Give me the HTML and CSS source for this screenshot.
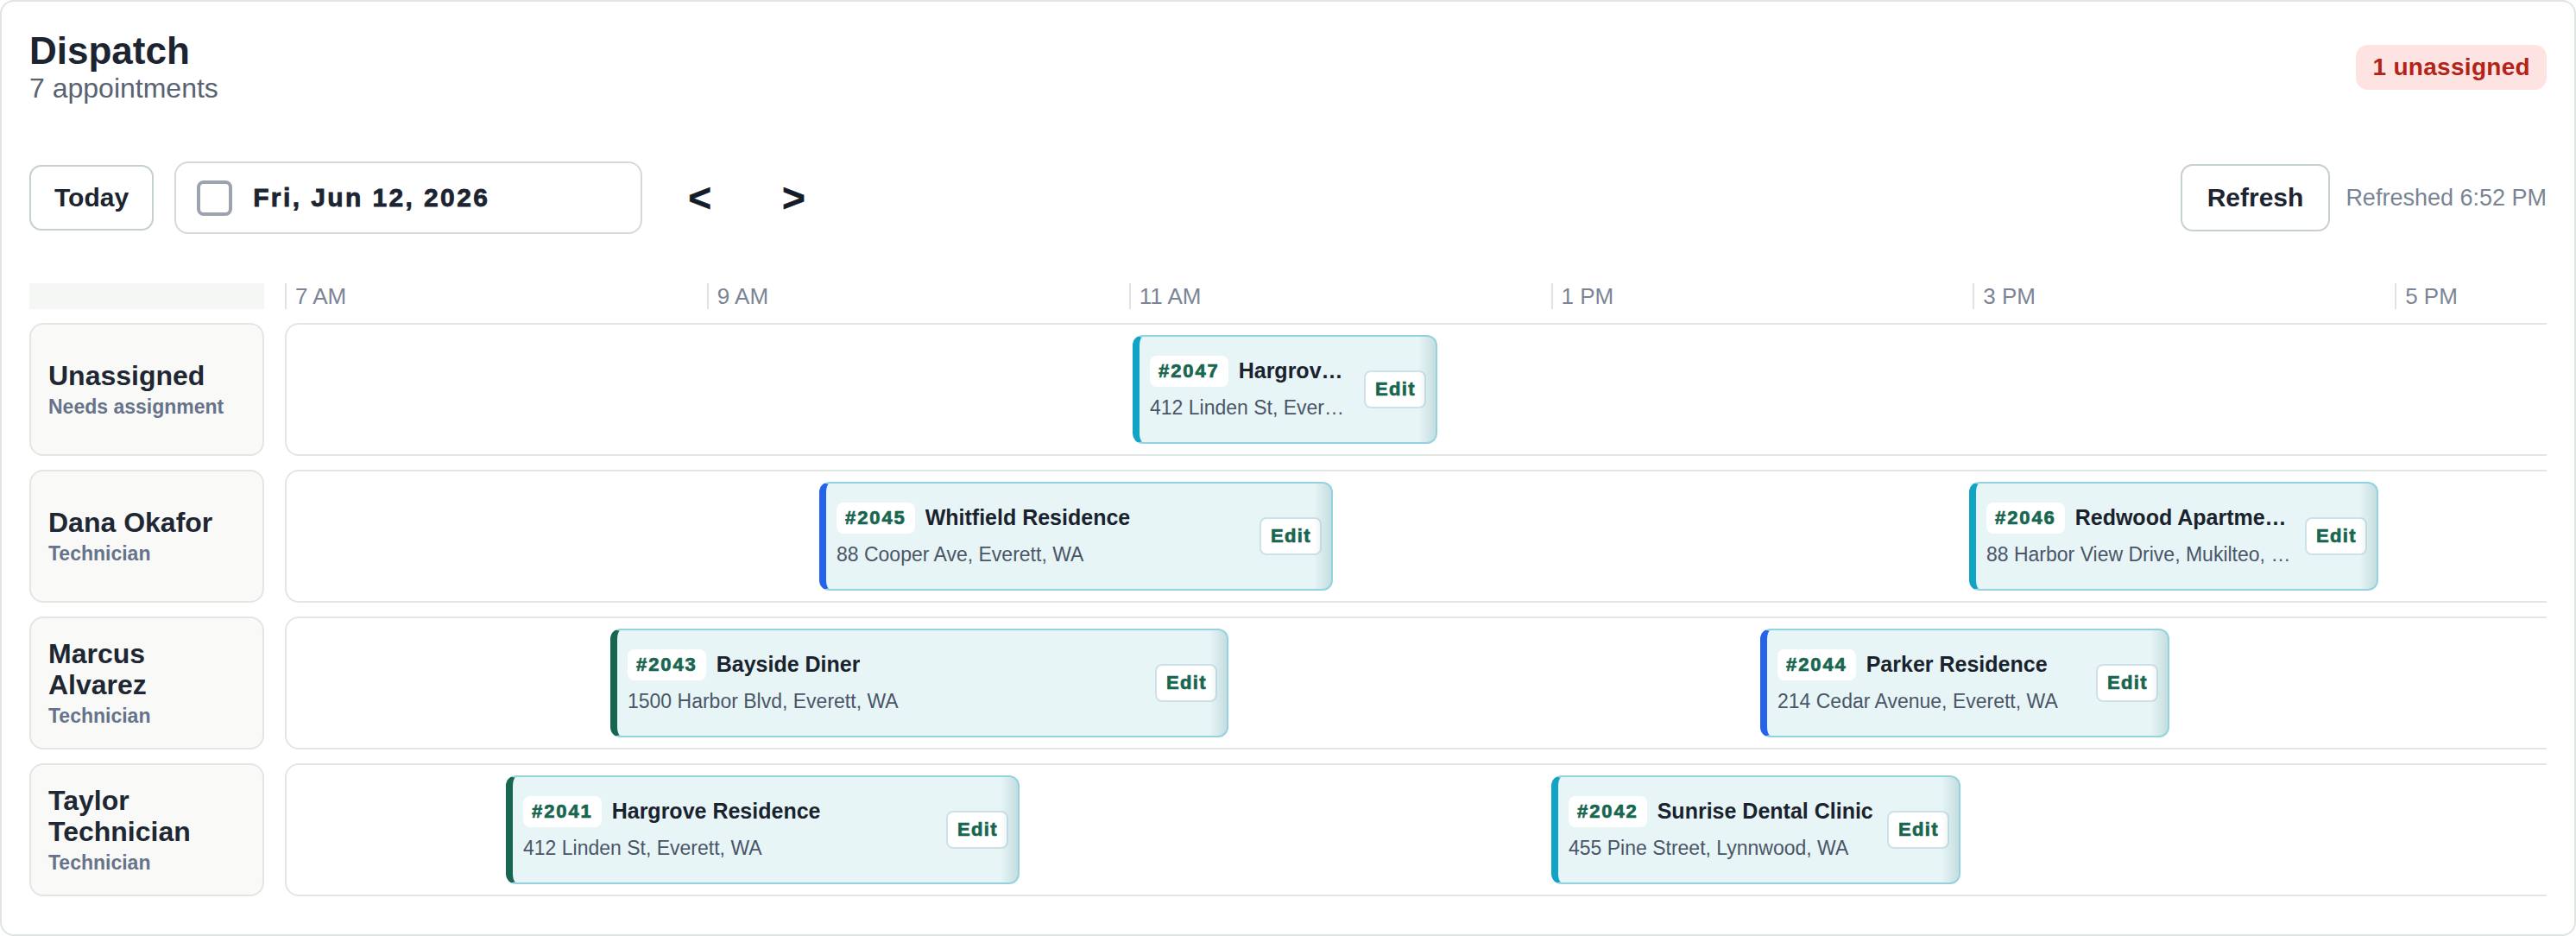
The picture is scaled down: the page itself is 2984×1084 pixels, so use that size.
FILE: index.html
```html
<!DOCTYPE html>
<html lang="en">
<head>
<meta charset="utf-8">
<title>Dispatch</title>
<link rel="stylesheet" href="styles.css">
</head>
<body>
<div class="page">
  <header class="head">
    <div class="head-text">
      <h1 class="title">Dispatch</h1>
      <div class="subtitle">7 appointments</div>
    </div>
    <span class="alert-pill">1 unassigned</span>
  </header>

  <div class="toolbar">
    <div class="toolbar-group">
      <button class="btn">Today</button>
      <label class="date-field"><span class="date-check"></span><span class="date-text">Fri, Jun 12, 2026</span></label>
      <button class="nav-btn">&lt;</button>
      <button class="nav-btn">&gt;</button>
    </div>
    <div class="toolbar-group toolbar-right">
      <button class="btn btn-refresh">Refresh</button>
      <span class="refreshed">Refreshed 6:52 PM</span>
    </div>
  </div>

  <div class="board">
    <div class="axis-spacer"></div>
    <div class="axis">
      <div class="tick">7 AM</div>
      <div class="tick">9 AM</div>
      <div class="tick">11 AM</div>
      <div class="tick">1 PM</div>
      <div class="tick">3 PM</div>
      <div class="tick">5 PM</div>
    </div>

    <div class="lane-label">
      <div class="lane-name">Unassigned</div>
      <div class="lane-sub">Needs assignment</div>
    </div>
    <div class="lane">
      <div class="job job-cyan" style="left:980px;width:353px">
        <div class="job-main">
          <div class="job-top"><span class="job-id">#2047</span><span class="job-title">Hargrove Residence</span></div>
          <div class="job-addr">412 Linden St, Everett, WA</div>
        </div>
        <button class="job-edit">Edit</button>
      </div>
    </div>

    <div class="lane-label">
      <div class="lane-name">Dana Okafor</div>
      <div class="lane-sub">Technician</div>
    </div>
    <div class="lane">
      <div class="job job-blue" style="left:617px;width:595px">
        <div class="job-main">
          <div class="job-top"><span class="job-id">#2045</span><span class="job-title">Whitfield Residence</span></div>
          <div class="job-addr">88 Cooper Ave, Everett, WA</div>
        </div>
        <button class="job-edit">Edit</button>
      </div>
      <div class="job job-cyan" style="left:1949px;width:474px">
        <div class="job-main">
          <div class="job-top"><span class="job-id">#2046</span><span class="job-title">Redwood Apartments</span></div>
          <div class="job-addr">88 Harbor View Drive, Mukilteo, WA</div>
        </div>
        <button class="job-edit">Edit</button>
      </div>
    </div>

    <div class="lane-label">
      <div class="lane-name">Marcus Alvarez</div>
      <div class="lane-sub">Technician</div>
    </div>
    <div class="lane">
      <div class="job job-green" style="left:375px;width:716px">
        <div class="job-main">
          <div class="job-top"><span class="job-id">#2043</span><span class="job-title">Bayside Diner</span></div>
          <div class="job-addr">1500 Harbor Blvd, Everett, WA</div>
        </div>
        <button class="job-edit">Edit</button>
      </div>
      <div class="job job-blue" style="left:1707px;width:474px">
        <div class="job-main">
          <div class="job-top"><span class="job-id">#2044</span><span class="job-title">Parker Residence</span></div>
          <div class="job-addr">214 Cedar Avenue, Everett, WA</div>
        </div>
        <button class="job-edit">Edit</button>
      </div>
    </div>

    <div class="lane-label">
      <div class="lane-name">Taylor Technician</div>
      <div class="lane-sub">Technician</div>
    </div>
    <div class="lane">
      <div class="job job-green" style="left:254px;width:595px">
        <div class="job-main">
          <div class="job-top"><span class="job-id">#2041</span><span class="job-title">Hargrove Residence</span></div>
          <div class="job-addr">412 Linden St, Everett, WA</div>
        </div>
        <button class="job-edit">Edit</button>
      </div>
      <div class="job job-cyan" style="left:1465px;width:474px">
        <div class="job-main">
          <div class="job-top"><span class="job-id">#2042</span><span class="job-title">Sunrise Dental Clinic</span></div>
          <div class="job-addr">455 Pine Street, Lynnwood, WA</div>
        </div>
        <button class="job-edit">Edit</button>
      </div>
    </div>
  </div>
</div>
</body>
</html>
```

FILE: styles.css
```css
* { box-sizing: border-box; }

html, body {
  margin: 0;
  padding: 0;
  background: #ffffff;
}

body {
  font-family: "Liberation Sans", Arial, sans-serif;
  color: #1b2430;
}

.page {
  min-height: 100vh;
  border: 2px solid #dfe5e0;
  border-radius: 16px;
  padding: 32px;
  overflow: hidden;
}

/* Header */
.head {
  display: flex;
  justify-content: space-between;
  align-items: center;
}

.title {
  margin: 0;
  font-size: 44px;
  line-height: 50px;
  font-weight: 700;
  color: #1b2430;
}

.subtitle {
  font-size: 32px;
  line-height: 37px;
  color: #586271;
}

.alert-pill {
  display: inline-flex;
  align-items: center;
  height: 52px;
  padding: 0 19px;
  border-radius: 14px;
  background: #fde3e1;
  color: #b42318;
  font-size: 28px;
  font-weight: 700;
  letter-spacing: 0.3px;
}

/* Toolbar */
.toolbar {
  margin-top: 66px;
  display: flex;
  justify-content: space-between;
  align-items: center;
}

.toolbar-group {
  display: flex;
  align-items: center;
  gap: 24px;
}

.toolbar-right {
  gap: 18px;
}

.btn {
  height: 76px;
  padding: 0 27px;
  border: 2px solid #c6d0cd;
  border-radius: 14px;
  background: #ffffff;
  font-family: "Liberation Sans", Arial, sans-serif;
  font-size: 30px;
  font-weight: 700;
  color: #1b2430;
}

.btn-refresh {
  height: 78px;
  padding: 0 29px;
}

.date-field {
  display: flex;
  align-items: center;
  gap: 24px;
  width: 542px;
  height: 84px;
  padding: 0 24px;
  border: 2px solid #d3dad7;
  border-radius: 16px;
  background: #ffffff;
}

.date-check {
  width: 41px;
  height: 41px;
  border: 4px solid #9aa3ae;
  border-radius: 8px;
  background: #ffffff;
}

.date-text {
  font-size: 30px;
  font-weight: 700;
  letter-spacing: 2.4px;
  -webkit-text-stroke: 0.8px currentColor;
  color: #1b2430;
}

.nav-btn {
  padding: 0 29px;
  border: 0;
  background: transparent;
  font-family: "Liberation Sans", Arial, sans-serif;
  font-size: 46px;
  font-weight: 700;
  line-height: 60px;
  -webkit-text-stroke: 0.6px currentColor;
  color: #151c29;
}

.refreshed {
  font-size: 27px;
  color: #7a8494;
}

/* Board */
.board {
  margin-top: 57px;
  display: grid;
  grid-template-columns: 272px 2933px;
  grid-template-rows: 30px repeat(4, 154px);
  column-gap: 24px;
  row-gap: 16px;
  overflow: hidden;
}

.axis-spacer {
  background: #f5f7f4;
}

.axis {
  display: grid;
  grid-template-columns: repeat(6, 1fr);
}

.tick {
  border-left: 2px solid #dfe4e1;
  padding-left: 10px;
  font-size: 26px;
  line-height: 30px;
  color: #7b8595;
}

.lane-label {
  display: flex;
  flex-direction: column;
  justify-content: center;
  padding: 0 20px;
  border: 2px solid #e1e7e3;
  border-radius: 16px;
  background: #f9faf8;
}

.lane-name {
  font-size: 32px;
  line-height: 36px;
  font-weight: 700;
  color: #1e2733;
}

.lane-sub {
  margin-top: 3px;
  font-size: 23px;
  line-height: 30px;
  font-weight: 700;
  color: #66738a;
}

.lane {
  position: relative;
  border: 2px solid #e1e7e3;
  border-radius: 16px;
  background: #ffffff;
}

/* Appointment cards */
.job {
  position: absolute;
  top: 12px;
  height: 126px;
  display: flex;
  align-items: center;
  gap: 14px;
  padding: 0 11px 0 12px;
  border: 2px solid #93d2de;
  border-left: 8px solid #12a4c4;
  border-radius: 12px;
  background: #e7f5f6;
  overflow: hidden;
}

.job::after {
  content: "";
  position: absolute;
  top: 0;
  right: 0;
  bottom: 0;
  width: 20px;
  background: linear-gradient(to right, rgba(20, 100, 110, 0), rgba(20, 100, 110, 0.16));
  pointer-events: none;
}

.job-cyan { border-left-color: #12a4c4; }
.job-blue { border-left-color: #2563eb; }
.job-green { border-left-color: #17664f; }

.job-main {
  flex: 1;
  min-width: 0;
  margin-top: -4px;
}

.job-top {
  display: flex;
  align-items: center;
  gap: 12px;
  min-width: 0;
}

.job-id {
  flex: none;
  height: 36px;
  padding: 0 10px;
  display: inline-flex;
  align-items: center;
  border-radius: 8px;
  background: #ffffff;
  font-size: 22px;
  font-weight: 700;
  letter-spacing: 1.9px;
  -webkit-text-stroke: 0.7px currentColor;
  color: #17664f;
}

.job-title {
  min-width: 0;
  overflow: hidden;
  white-space: nowrap;
  text-overflow: ellipsis;
  font-size: 25px;
  font-weight: 700;
  color: #1a222e;
}

.job-addr {
  margin-top: 9px;
  overflow: hidden;
  white-space: nowrap;
  text-overflow: ellipsis;
  font-size: 23px;
  line-height: 30px;
  color: #4a5568;
}

.job-edit {
  flex: none;
  width: 72px;
  height: 44px;
  padding: 0;
  border: 2px solid #cde2e8;
  border-radius: 8px;
  background: #ffffff;
  font-family: "Liberation Sans", Arial, sans-serif;
  font-size: 22px;
  font-weight: 700;
  letter-spacing: 1.4px;
  text-indent: 1px;
  -webkit-text-stroke: 0.7px currentColor;
  color: #17664f;
}
```
